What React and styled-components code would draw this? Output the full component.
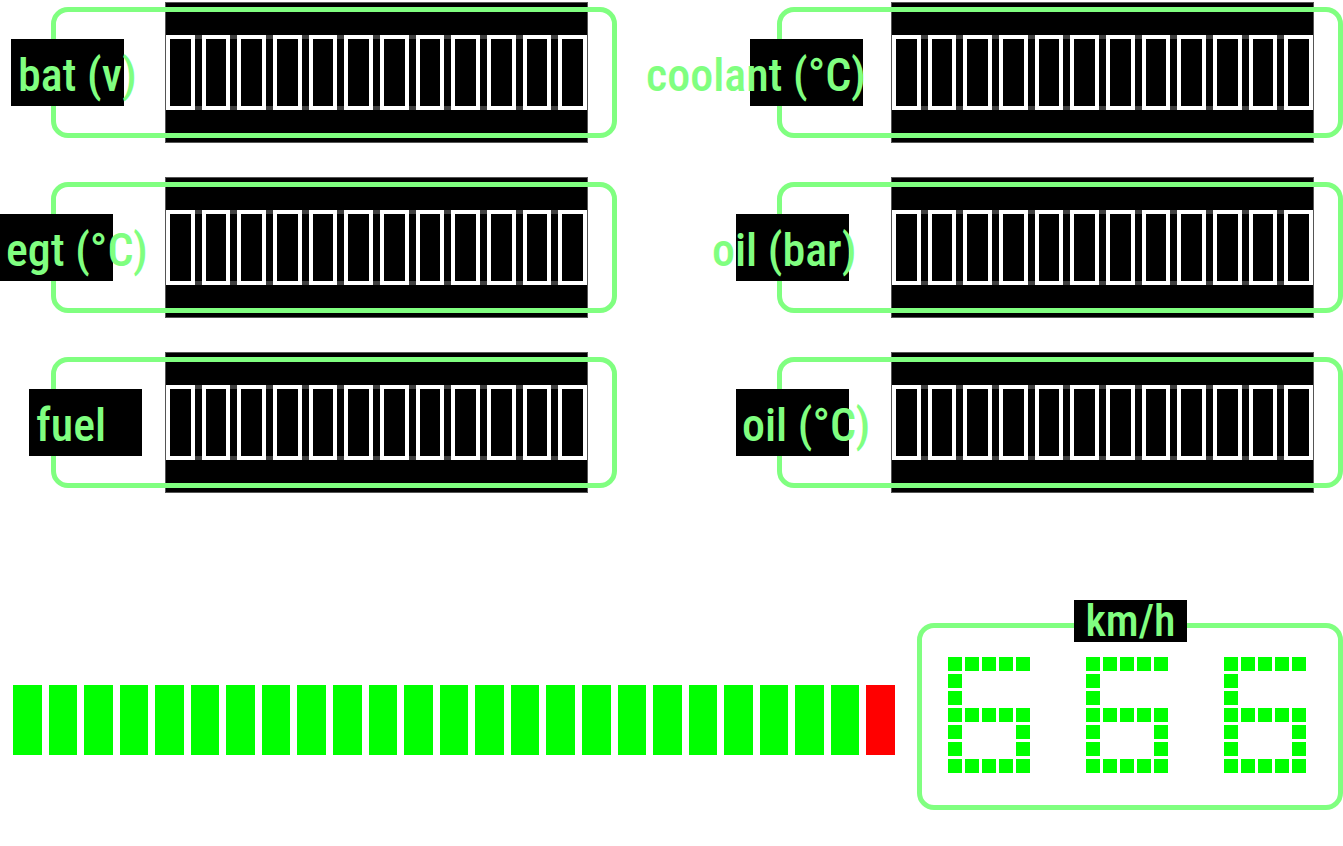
import React from "react";
import styled, { createGlobalStyle } from "styled-components";

const GlobalStyle = createGlobalStyle`
  * { box-sizing: border-box; }
  body {
    margin: 0;
    background: #fff;
    color: #80ff80;
    font-family: "Roboto Condensed", "Liberation Sans Narrow", "Liberation Sans", sans-serif;
    font-weight: 500;
    overflow-x: hidden;
  }
`;

const Dashboard = styled.main`
  display: flex;
  flex-direction: column;
  gap: 131px;
  padding-top: 2px;
`;

const GaugeGrid = styled.section`
  display: grid;
  grid-template-columns: 1fr 1fr;
  gap: 35px 160px;
  padding-left: 51px;
`;

const Gauge = styled.div`
  position: relative;
  display: flex;
  height: 141px;
  margin-bottom: -1px;
  padding: 0 29px 0 114px;

  &::after {
    content: "";
    position: absolute;
    inset: 5px 0;
    border: 5px solid #80ff80;
    border-radius: 17px;
  }
`;

const Meter = styled.div`
  flex: 1;
  display: flex;
  align-items: center;
  background: #000;
  border: 1px solid #555;
`;

const Cells = styled.div`
  flex: 1;
  display: grid;
  grid-template-columns: repeat(12, 1fr);
  gap: 7px;
  height: 75px;
  background: #000;
  border: solid #404040;
  border-width: 4px 0;
`;

const Cell = styled.div`
  margin: -4px 0;
  border: 4px solid #fff;
  background: #000;
`;

const Plate = styled.div`
  position: absolute;
  z-index: 1;
  display: flex;
  align-items: center;
  width: 113px;
  background: #000;
  line-height: 42px;
  white-space: nowrap;
`;

const GaugeLabel = styled(Plate)`
  top: 37px;
  left: ${(p) => p.$left}px;
  height: 67px;
  padding-top: 4px;
  font-size: 46px;
`;

const LabelText = styled.span`
  margin-left: ${(p) => p.$start}px;
`;

const BottomRow = styled.section`
  display: flex;
  align-items: flex-start;
  gap: 22px;
  padding-left: 13px;
`;

const RevBar = styled.div`
  flex: 1;
  display: grid;
  grid-template-columns: repeat(25, 1fr);
  gap: 7px;
  margin-top: 62px;
`;

const RevSegment = styled.div`
  height: 70px;
  background: ${(p) => (p.$limit ? "#f00" : "#0f0")};
`;

const SpeedPanel = styled.div`
  position: relative;
  display: flex;
  gap: 56px;
  width: 426px;
  height: 187px;
  padding: 29px 26px;
  border: 5px solid #80ff80;
  border-radius: 17px;
`;

const UnitLabel = styled(Plate)`
  top: -28px;
  left: calc(50% - 56px);
  height: 42px;
  justify-content: center;
  font-size: 44px;
`;

const Digit = styled.div`
  display: grid;
  grid-template-columns: repeat(5, 14px);
  grid-auto-rows: 14px;
  gap: 3px;
`;

const Dot = styled.i`
  background: ${(p) => (p.$on ? "#0f0" : "transparent")};
`;

const gauges = [
  { name: "bat (v)", left: -40, start: 7 },
  { name: "coolant (°C)", left: -27, start: -104 },
  { name: "egt (°C)", left: -51, start: 6 },
  { name: "oil (bar)", left: -41, start: -24 },
  { name: "fuel", left: -22, start: 7 },
  { name: "oil (°C)", left: -41, start: 6 },
];

const SIX = "11111" + "10000" + "10000" + "11111" + "10001" + "10001" + "11111";

export default function App() {
  return (
    <>
      <GlobalStyle />
      <Dashboard>
        <GaugeGrid>
          {gauges.map((g) => (
            <Gauge key={g.name}>
              <GaugeLabel $left={g.left}>
                <LabelText $start={g.start}>{g.name}</LabelText>
              </GaugeLabel>
              <Meter role="meter" aria-label={g.name} aria-valuenow={0}>
                <Cells>
                  {Array.from({ length: 12 }, (_, i) => (
                    <Cell key={i} />
                  ))}
                </Cells>
              </Meter>
            </Gauge>
          ))}
        </GaugeGrid>
        <BottomRow>
          <RevBar>
            {Array.from({ length: 25 }, (_, i) => (
              <RevSegment key={i} $limit={i === 24} />
            ))}
          </RevBar>
          <SpeedPanel>
            <UnitLabel>km/h</UnitLabel>
            {[0, 1, 2].map((d) => (
              <Digit key={d} role="img" aria-label="6">
                {[...SIX].map((bit, i) => (
                  <Dot key={i} $on={bit === "1"} />
                ))}
              </Digit>
            ))}
          </SpeedPanel>
        </BottomRow>
      </Dashboard>
    </>
  );
}
